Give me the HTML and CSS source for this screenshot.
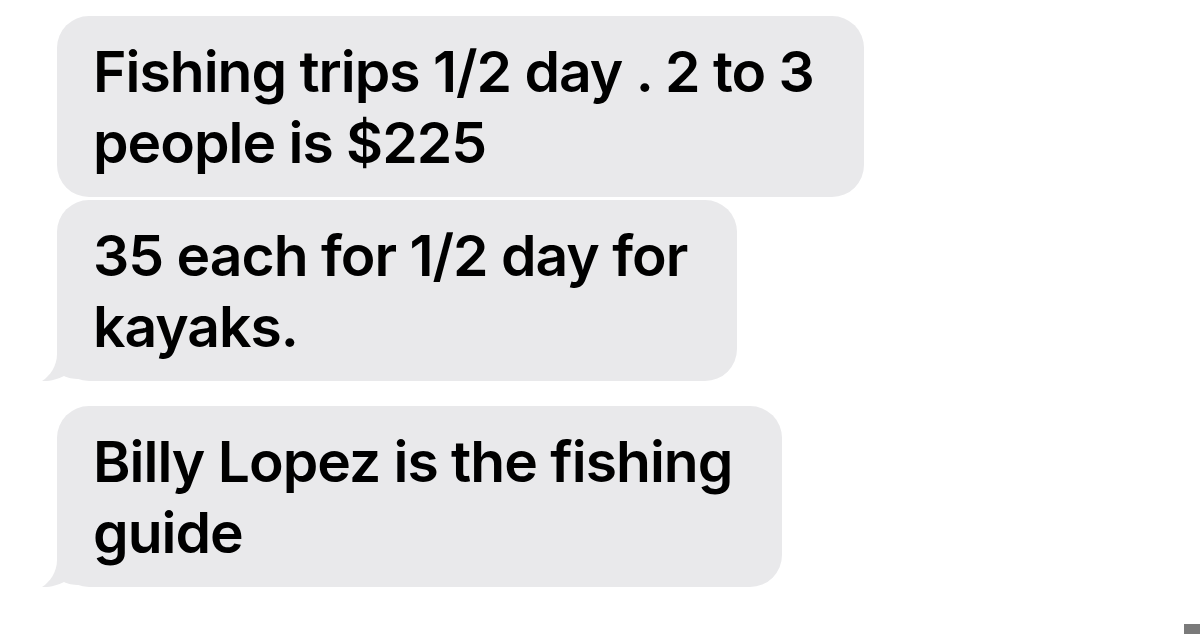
FILE: index.html
```html
<!DOCTYPE html>
<html>
<head>
<meta charset="utf-8">
<link rel="stylesheet" href="styles.css">
</head>
<body>
<div class="thread">
  <div class="bubble b1">Fishing trips 1/2 day . 2 to 3<br>people is $225</div>
  <div class="bubble b2 tailed">35 each for 1/2 day for<br>kayaks.
    <svg class="tail" width="40" height="36" viewBox="0 0 40 36"><path d="M17 0 L17 8 C17 20 10 30 2 35 C10 35.5 18 33 24 30 C28 32 32 33 40 33 L40 0 Z" fill="#e9e9eb"/></svg>
  </div>
  <div class="bubble b3 tailed">Billy Lopez is the fishing<br>guide
    <svg class="tail" width="40" height="36" viewBox="0 0 40 36"><path d="M17 0 L17 8 C17 20 10 30 2 35 C10 35.5 18 33 24 30 C28 32 32 33 40 33 L40 0 Z" fill="#e9e9eb"/></svg>
  </div>
</div>
<div class="corner"></div>
</body>
</html>
```
FILE: styles.css
```css
html, body {
  margin: 0;
  padding: 0;
  background: #ffffff;
  width: 1200px;
  height: 634px;
  overflow: hidden;
}
body {
  font-family: Inter, "Liberation Sans", sans-serif;
  position: relative;
}
.thread {
  display: flex;
  flex-direction: column;
  align-items: flex-start;
  padding: 16px 0 0 57px;
}
.bubble {
  position: relative;
  background: #e9e9eb;
  color: #000000;
  font-size: 57px;
  line-height: 71px;
  font-weight: 600;
  letter-spacing: -1px;
  white-space: nowrap;
  padding: 20px 50px 19px 36px;
  border-radius: 32px;
}
.b2 {
  margin-top: 3px;
}
.b3 {
  margin-top: 25px;
}
.tail {
  position: absolute;
  left: -17px;
  bottom: -1px;
}
.corner {
  position: absolute;
  right: 0;
  bottom: 0;
  width: 16px;
  height: 10px;
  background: #7a7a7a;
}
```
